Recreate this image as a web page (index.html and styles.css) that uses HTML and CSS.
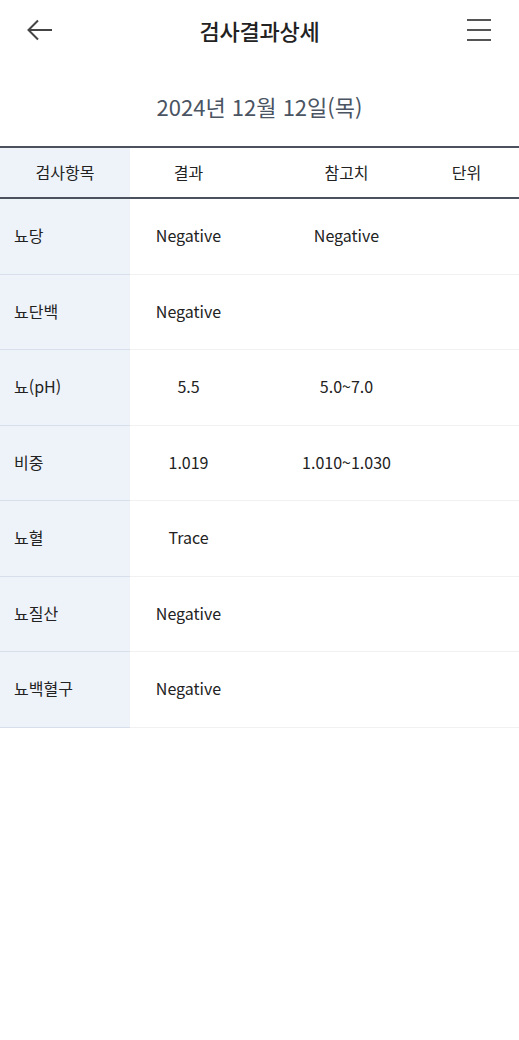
FILE: index.html
```html
<!DOCTYPE html>
<html lang="ko">
<head>
<meta charset="utf-8">
<link rel="stylesheet" href="styles.css">
</head>
<body>
<header class="topbar">
  <button class="icon-btn" aria-label="back">
    <svg width="26" height="22" viewBox="0 0 26 22"><path d="M25 11H2M11 1.5L1.5 11L11 20.5" fill="none" stroke="#444" stroke-width="2"/></svg>
  </button>
  <h1 class="title">검사결과상세</h1>
  <button class="icon-btn" aria-label="menu">
    <svg width="26" height="24" viewBox="0 0 26 24"><path d="M1 2H25M1 12H25M1 22H25" fill="none" stroke="#555" stroke-width="2"/></svg>
  </button>
</header>
<div class="date">2024년 12월 12일(목)</div>
<div class="table">
  <div class="row head">
    <div class="c name">검사항목</div><div class="c">결과</div><div class="c">참고치</div><div class="c unit">단위</div>
  </div>
  <div class="row"><div class="c name">뇨당</div><div class="c">Negative</div><div class="c">Negative</div><div class="c unit"></div></div>
  <div class="row"><div class="c name">뇨단백</div><div class="c">Negative</div><div class="c"></div><div class="c unit"></div></div>
  <div class="row"><div class="c name">뇨(pH)</div><div class="c">5.5</div><div class="c">5.0~7.0</div><div class="c unit"></div></div>
  <div class="row"><div class="c name">비중</div><div class="c">1.019</div><div class="c">1.010~1.030</div><div class="c unit"></div></div>
  <div class="row"><div class="c name">뇨혈</div><div class="c">Trace</div><div class="c"></div><div class="c unit"></div></div>
  <div class="row"><div class="c name">뇨질산</div><div class="c">Negative</div><div class="c"></div><div class="c unit"></div></div>
  <div class="row"><div class="c name">뇨백혈구</div><div class="c">Negative</div><div class="c"></div><div class="c unit"></div></div>
</div>
</body>
</html>
```
FILE: styles.css
```css
* { box-sizing: border-box; }
body {
  margin: 0;
  background: #fff;
  font-family: "Noto Sans CJK KR", "Noto Sans", sans-serif;
  color: #222;
}
.topbar {
  height: 60px;
  display: flex;
  align-items: center;
  justify-content: space-between;
  padding: 0 27px 0 27px;
}
.icon-btn {
  border: 0;
  background: none;
  padding: 0;
  width: 26px;
  height: 24px;
  display: flex;
  align-items: center;
  justify-content: center;
}
.title {
  margin: 0;
  font-size: 22px;
  font-weight: 500;
  color: #222;
  letter-spacing: -0.2px;
}
.date {
  text-align: center;
  margin-top: 30px;
  height: 56px;
  font-size: 22px;
  color: #4a5462;
  letter-spacing: 0;
}
.table {
  border-top: 2px solid #4b525e;
}
.row {
  display: grid;
  grid-template-columns: 130px 117px 199px 73px;
  height: 75.5px;
  border-bottom: 1px solid #f1f1f1;
}
.row.head {
  height: 51px;
  border-bottom: 2px solid #4b525e;
}
.c {
  display: flex;
  align-items: center;
  justify-content: center;
  font-size: 16px;
  color: #222;
  letter-spacing: 0;
  padding-bottom: 2px;
}
.c.name {
  background: #eef2f9;
  justify-content: flex-start;
  padding-left: 14px;
  box-shadow: 0 1px 0 #d6dfea;
}
.head .c { font-size: 16px; }
.head .c.name { justify-content: center; padding-left: 0; box-shadow: none; }
.c.unit { padding-right: 32px; }
```
